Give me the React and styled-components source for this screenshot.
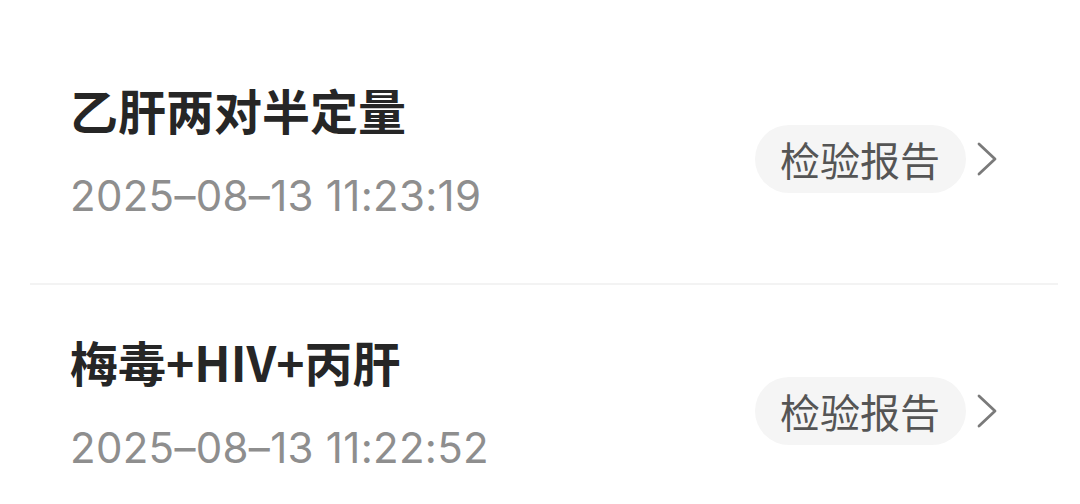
import React from 'react';
import styled, { createGlobalStyle } from 'styled-components';

const GlobalStyle = createGlobalStyle`
  html, body {
    margin: 0;
    padding: 0;
    background: #ffffff;
  }
  body {
    font-family: "Noto Sans CJK SC", "Noto Sans", sans-serif;
    -webkit-font-smoothing: antialiased;
  }
`;

const reports = [
  { id: 1, name: '乙肝两对半定量', time: '2025–08–13 11:23:19' },
  { id: 2, name: '梅毒+HIV+丙肝', time: '2025–08–13 11:22:52' },
];

const Chevron = () => (
  <svg width="22" height="34" viewBox="0 0 22 34" fill="none">
    <path d="M3 2 L19 17 L3 32" stroke="#7a7a7a" strokeWidth="2.8" strokeLinecap="round" strokeLinejoin="round" />
  </svg>
);

class App extends React.Component {
  render() {
    return (
      <>
        <GlobalStyle />
        <ListWrap>
          {reports.map(item => (
            <Row key={item.id}>
              <InfoCol>
                <TitleDiv>{item.name}</TitleDiv>
                <TimeDiv>{item.time}</TimeDiv>
              </InfoCol>
              <ActionSpan>
                <ReportPill>检验报告</ReportPill>
                <Chevron />
              </ActionSpan>
            </Row>
          ))}
        </ListWrap>
      </>
    );
  }
}

export default App;

const ListWrap = styled.div`
  display: flex;
  flex-direction: column;
  padding: 33px 22px 0 30px;
`;

const Row = styled.div`
  display: flex;
  align-items: center;
  justify-content: space-between;
  height: 250px;
  padding: 0 60px 0 40px;
  border-bottom: 2px solid #f3f3f3;
`;

const InfoCol = styled.div`
  display: flex;
  flex-direction: column;
  padding-bottom: 14px;
`;

const TitleDiv = styled.div`
  font-size: 48px;
  line-height: 56px;
  font-weight: 700;
  color: #262626;
`;

const TimeDiv = styled.div`
  margin-top: 34px;
  font-family: Inter, "Noto Sans", sans-serif;
  font-size: 42px;
  line-height: 50px;
  letter-spacing: 0.3px;
  color: #8e8e8e;
`;

const ActionSpan = styled.span`
  display: flex;
  align-items: center;
  gap: 10px;
  margin-top: 2px;
`;

const ReportPill = styled.span`
  display: flex;
  align-items: center;
  height: 68px;
  padding: 0 26px 0 25px;
  border-radius: 34px;
  background: #f5f5f5;
  font-size: 40px;
  color: #555555;
`;
